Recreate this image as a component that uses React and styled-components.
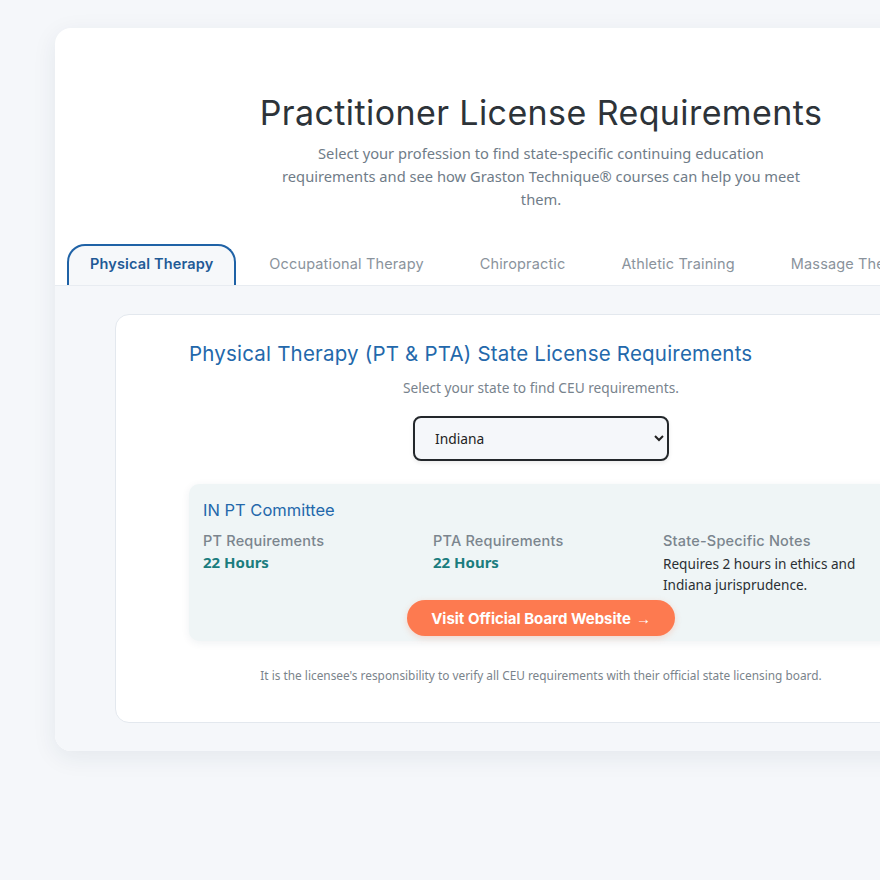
import React from "react";
import styled, { createGlobalStyle } from "styled-components";

const Global = createGlobalStyle`
  html, body { margin: 0; padding: 0; overflow: hidden; background: #f5f7fa; }
  body { font-family: "Noto Sans", "Open Sans", sans-serif; }
  * { box-sizing: border-box; }
`;

const head = `"Inter", "Lato", sans-serif`;
const text = `"Noto Sans", "Open Sans", sans-serif`;

const Page = styled.div`
  padding: 28px 0 130px 55px;
  width: 1100px;
`;

const Card = styled.section`
  width: 972px;
  background: #fff;
  border-radius: 16px;
  box-shadow: 0 6px 24px rgba(30, 50, 80, 0.08);
  overflow: hidden;
`;

const Hero = styled.header`
  padding: 64px 0 33px;
  text-align: center;
`;

const Title = styled.h1`
  margin: 0 0 9px;
  font-family: ${head};
  font-weight: 400;
  font-size: 34px;
  letter-spacing: 0.4px;
  color: #2d3339;
`;

const Lead = styled.p`
  margin: 0 auto;
  max-width: 540px;
  font-family: ${text};
  font-size: 14.7px;
  line-height: 23px;
  color: #6f7c88;
`;

const Tabs = styled.nav`
  display: flex;
  gap: 10px;
  padding: 0 12px;
  border-bottom: 1.5px solid #e8ecf1;
`;

const Tab = styled.button`
  height: 41px;
  padding: 0 ${(p) => (p.$active ? 21 : 23)}px 4px;
  margin: 0 ${(p) => (p.$active ? 0 : -2)}px;
  border: 2px solid ${(p) => (p.$active ? "#1f62a6" : "transparent")};
  border-bottom: none;
  border-radius: 18px 18px 0 0;
  background: ${(p) => (p.$active ? "#f6f8fa" : "transparent")};
  font-family: ${head};
  font-size: 14.5px;
  letter-spacing: 0.15px;
  font-weight: ${(p) => (p.$active ? 600 : 400)};
  color: ${(p) => (p.$active ? "#1f5a96" : "#8a939c")};
  white-space: nowrap;
  cursor: pointer;
`;

const Body = styled.div`
  background: #f5f7fa;
  padding: 28px 0 28px 60px;
`;

const Panel = styled.div`
  width: 852px;
  background: #fff;
  border: 1px solid #e3e8ee;
  border-radius: 14px;
  padding: 26px 73px 38px;
`;

const PanelTitle = styled.h2`
  margin: 0 0 12px;
  font-family: ${head};
  font-weight: 400;
  font-size: 20.5px;
  letter-spacing: 0.2px;
  color: #2368ab;
`;

const Hint = styled.p`
  margin: 0 0 18px;
  text-align: center;
  font-family: ${text};
  font-size: 13.7px;
  line-height: 20px;
  color: #78838d;
`;

const SelectRow = styled.div`
  display: flex;
  justify-content: center;
  margin-bottom: 23px;
`;

const Select = styled.select`
  width: 256px;
  height: 45px;
  padding: 0 16px;
  border: 2px solid #23272b;
  border-radius: 8px;
  background: #f5f7fa;
  font-family: ${text};
  font-size: 13.8px;
  color: #222;
  box-shadow: 0 2px 4px rgba(0,0,0,0.08);
`;

const Info = styled.div`
  background: #eff5f6;
  border-radius: 10px;
  padding: 16px 14px 5px;
  box-shadow: 0 2px 8px rgba(30, 60, 80, 0.07);
`;

const Board = styled.h3`
  margin: 0 0 12px;
  font-family: ${head};
  font-weight: 400;
  font-size: 16.5px;
  color: #2368ab;
`;

const Cols = styled.div`
  display: grid;
  grid-template-columns: 230px 230px 1fr;
`;

const Label = styled.div`
  font-family: ${head};
  font-size: 14.5px;
  letter-spacing: 0.2px;
  font-weight: 500;
  color: #7b858e;
  margin-bottom: 2px;
`;

const Value = styled.div`
  font-family: ${text};
  font-weight: 700;
  font-size: 15px;
  line-height: 22px;
  color: #1b7d7e;
`;

const Note = styled.div`
  font-family: ${text};
  font-size: 13.6px;
  line-height: 21px;
  margin-top: 4px;
  color: #2a2f33;
`;

const BtnRow = styled.div`
  display: flex;
  justify-content: center;
  margin-top: 5px;
`;

const Button = styled.a`
  display: inline-flex;
  align-items: center;
  gap: 5px;
  height: 36px;
  padding: 0 24px;
  border-radius: 18px;
  background: #fd7a50;
  color: #fff;
  font-family: ${head};
  font-weight: 700;
  font-size: 15px;
  text-decoration: none;
  box-shadow: 0 2px 6px rgba(253, 122, 80, 0.25);
`;

const Arrow = styled.span`
  font-family: "Noto Sans", sans-serif;
  font-weight: 400;
`;

const Disclaimer = styled.p`
  margin: 26px 0 0;
  text-align: center;
  font-family: ${text};
  font-size: 11.85px;
  line-height: 17px;
  color: #7a838b;
`;

const tabs = [
  "Physical Therapy",
  "Occupational Therapy",
  "Chiropractic",
  "Athletic Training",
  "Massage Therapy",
];

export default function App() {
  return (
    <>
      <Global />
      <Page>
        <Card>
          <Hero>
            <Title>Practitioner License Requirements</Title>
            <Lead>
              Select your profession to find state-specific continuing education
              requirements and see how Graston Technique® courses can help you meet
              them.
            </Lead>
          </Hero>
          <Tabs>
            {tabs.map((t, i) => (
              <Tab key={t} $active={i === 0}>
                {t}
              </Tab>
            ))}
          </Tabs>
          <Body>
            <Panel>
              <PanelTitle>Physical Therapy (PT &amp; PTA) State License Requirements</PanelTitle>
              <Hint>Select your state to find CEU requirements.</Hint>
              <SelectRow>
                <Select defaultValue="Indiana">
                  <option>Indiana</option>
                </Select>
              </SelectRow>
              <Info>
                <Board>IN PT Committee</Board>
                <Cols>
                  <div>
                    <Label>PT Requirements</Label>
                    <Value>22 Hours</Value>
                  </div>
                  <div>
                    <Label>PTA Requirements</Label>
                    <Value>22 Hours</Value>
                  </div>
                  <div>
                    <Label>State-Specific Notes</Label>
                    <Note>
                      Requires 2 hours in ethics and
                      <br />
                      Indiana jurisprudence.
                    </Note>
                  </div>
                </Cols>
                <BtnRow>
                  <Button href="#">
                    Visit Official Board Website<Arrow>→</Arrow>
                  </Button>
                </BtnRow>
              </Info>
              <Disclaimer>
                It is the licensee's responsibility to verify all CEU requirements with
                their official state licensing board.
              </Disclaimer>
            </Panel>
          </Body>
        </Card>
      </Page>
    </>
  );
}
